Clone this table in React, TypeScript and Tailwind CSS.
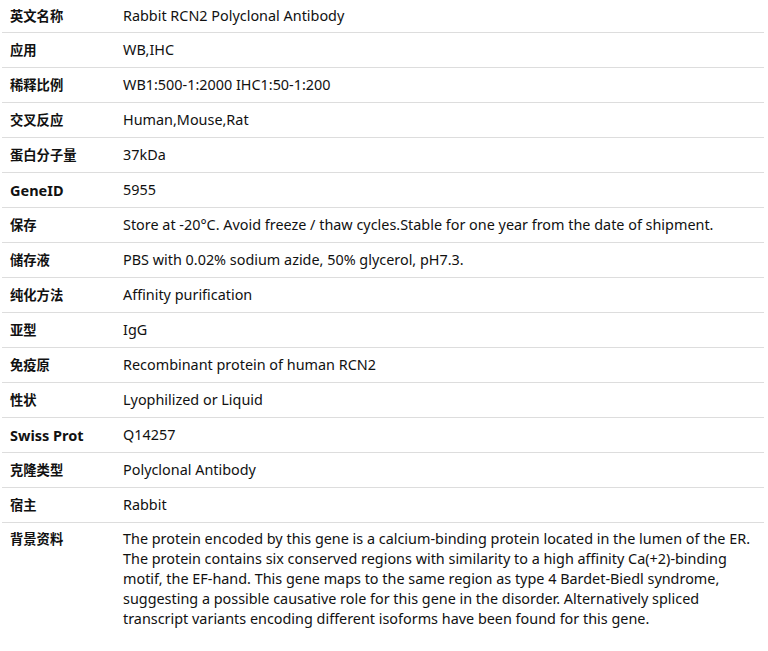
import React from "react";

const rows: [string, string][] = [
  ["英文名称", "Rabbit RCN2 Polyclonal Antibody"],
  ["应用", "WB,IHC"],
  ["稀释比例", "WB1:500-1:2000 IHC1:50-1:200"],
  ["交叉反应", "Human,Mouse,Rat"],
  ["蛋白分子量", "37kDa"],
  ["GeneID", "5955"],
  ["保存", "Store at -20°C. Avoid freeze / thaw cycles.Stable for one year from the date of shipment."],
  ["储存液", "PBS with 0.02% sodium azide, 50% glycerol, pH7.3."],
  ["纯化方法", "Affinity purification"],
  ["亚型", "IgG"],
  ["免疫原", "Recombinant protein of human RCN2"],
  ["性状", "Lyophilized or Liquid"],
  ["Swiss Prot", "Q14257"],
  ["克隆类型", "Polyclonal Antibody"],
  ["宿主", "Rabbit"],
];

const paraLines = [
  "The protein encoded by this gene is a calcium-binding protein located in the lumen of the ER.",
  "The protein contains six conserved regions with similarity to a high affinity Ca(+2)-binding",
  "motif, the EF-hand. This gene maps to the same region as type 4 Bardet-Biedl syndrome,",
  "suggesting a possible causative role for this gene in the disorder. Alternatively spliced",
  "transcript variants encoding different isoforms have been found for this gene.",
];

const isLatin = (s: string) => /^[A-Za-z ]+$/.test(s);

export default function App() {
  return (
    <div
      className="w-[768px] h-[651px] bg-white text-[#111]"
      style={{ fontFamily: '"Noto Sans", "Noto Sans CJK SC", sans-serif' }}
    >
      <div className="ml-[2px] w-[762px] flex flex-col">
        {rows.map(([k, v], i) => (
          <div
            key={k}
            className={`flex border-b border-[#dddddd] ${i === 0 ? "py-[6px]" : "py-[7px]"}`}
          >
            <div
              className={`w-[113px] shrink-0 pl-2 font-bold leading-[20px] ${
                isLatin(k) ? "text-[14.5px]" : "text-[13.3px]"
              }`}
            >
              {k}
            </div>
            <div className="flex-1 px-2 text-[14.4px] leading-[20px] whitespace-nowrap">{v}</div>
          </div>
        ))}
        <div className="flex pt-[6px] pb-2">
          <div className="w-[113px] shrink-0 pl-2 text-[13.3px] font-bold leading-[20px]">背景资料</div>
          <div className="flex-1 pl-2 text-[14.4px] leading-[20px] whitespace-nowrap">
            {paraLines.map((l) => (
              <div key={l}>{l}</div>
            ))}
          </div>
        </div>
      </div>
    </div>
  );
}
